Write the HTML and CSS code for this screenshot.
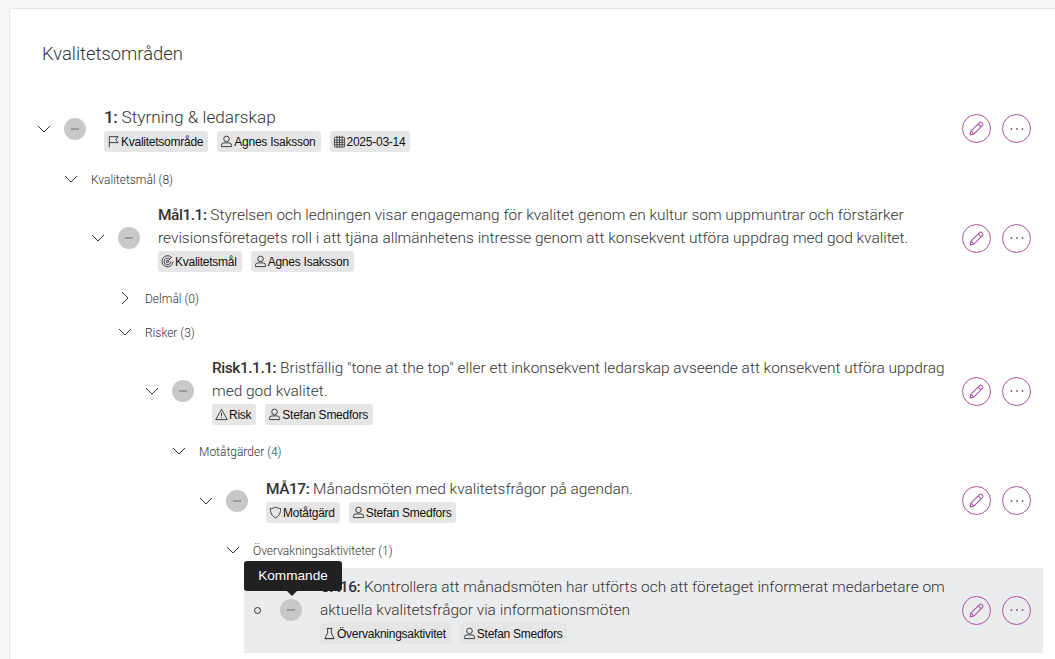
FILE: index.html
```html
<!DOCTYPE html>
<html lang="sv">
<head>
<meta charset="utf-8">
<title>Kvalitetsområden</title>
<link rel="stylesheet" href="styles.css">
</head>
<body>
<svg class="defs" width="0" height="0" aria-hidden="true">
  <symbol id="i-down" viewBox="0 0 14 14"><path d="M1 4l6 6 6-6" fill="none" stroke="currentColor"/></symbol>
  <symbol id="i-right" viewBox="0 0 14 14"><path d="M4 1l6 6-6 6" fill="none" stroke="currentColor"/></symbol>
  <symbol id="i-pen" viewBox="0 0 18 18"><g fill="none" stroke="currentColor" stroke-width="1.1" stroke-linejoin="round"><path d="M2.2 15.8l.9-4L12.2 2.7a1.6 1.6 0 0 1 2.3 0l.8.8a1.6 1.6 0 0 1 0 2.3L6.200 14.900z"/><path d="M10.800 4.100l3.100 3.100M3.100 11.800l3.100 3.100"/></g></symbol>
  <symbol id="i-dots" viewBox="0 0 18 4"><g fill="currentColor"><circle cx="3.500" cy="2" r=".9"/><circle cx="9" cy="2" r=".9"/><circle cx="14.500" cy="2" r=".9"/></g></symbol>
  <symbol id="i-flag" viewBox="0 0 14 14"><path d="M2.500 13V1.800h9.500L9.300 5l2.700 3.200H2.500" fill="none" stroke="currentColor"/></symbol>
  <symbol id="i-user" viewBox="0 0 14 14"><g fill="none" stroke="currentColor"><circle cx="7" cy="4.200" r="3"/><path d="M1.500 12.500v-1.300a2.700 2.700 0 0 1 2.700-2.700h5.600a2.700 2.700 0 0 1 2.700 2.700v1.300z"/></g></symbol>
  <symbol id="i-cal" viewBox="0 0 14 14"><g fill="none" stroke="currentColor" stroke-width=".9"><rect x="1.500" y="2.500" width="11" height="10.500" rx="1"/><path d="M1.500 5.500h11M1.500 8h11M1.500 10.500h11M4.200 2.500V13M7 1v12M9.800 2.500V13M4.200 1v1.500M9.800 1v1.500"/></g></symbol>
  <symbol id="i-target" viewBox="0 0 14 14"><g fill="none" stroke="currentColor" stroke-width="1"><path d="M11.500 2.800A6 6 0 1 0 13 7"/><path d="M9.300 4.200A3.600 3.600 0 1 0 10.600 7"/><circle cx="7" cy="7" r="1.300"/><path d="M7 7l5-5"/></g></symbol>
  <symbol id="i-warn" viewBox="0 0 14 14"><path d="M7 1.500L13.200 12.500H.8zM7 5.200v3.800M7 10v1.100" fill="none" stroke="currentColor" stroke-linejoin="round"/></symbol>
  <symbol id="i-shield" viewBox="0 0 14 14"><path d="M7 1.200C9 2.300 10.800 2.700 12.500 2.700c0 4.700-1.500 8.300-5.500 10.100C3 11 1.500 7.400 1.500 2.700 3.200 2.700 5 2.300 7 1.200z" fill="none" stroke="currentColor"/></symbol>
  <symbol id="i-flask" viewBox="0 0 14 14"><path d="M4 1.500h6M5 1.500v5L2 12.500h10L9 6.500v-5M2 12.500h10" fill="none" stroke="currentColor"/></symbol>
</svg>

<main class="card">
  <h1 class="heading">Kvalitetsområden</h1>
  <div class="tree">

    <div class="row row-top">
      <button class="toggle"><svg class="chev"><use href="#i-down"/></svg></button>
      <span class="status"><span class="status-bar"></span></span>
      <div class="body">
        <div class="title title-lg"><b>1:</b> Styrning &amp; ledarskap</div>
        <div class="tags">
          <span class="tag"><svg class="tag-icon"><use href="#i-flag"/></svg>Kvalitetsområde</span>
          <span class="tag"><svg class="tag-icon"><use href="#i-user"/></svg>Agnes Isaksson</span>
          <span class="tag"><svg class="tag-icon"><use href="#i-cal"/></svg>2025-03-14</span>
        </div>
      </div>
      <div class="actions">
        <button class="act"><svg class="pen"><use href="#i-pen"/></svg></button>
        <button class="act"><svg class="dots"><use href="#i-dots"/></svg></button>
      </div>
    </div>

    <div class="nest">
      <div class="section"><svg class="chev"><use href="#i-down"/></svg><span>Kvalitetsmål (8)</span></div>

      <div class="level">
        <div class="row">
          <button class="toggle"><svg class="chev"><use href="#i-down"/></svg></button>
          <span class="status"><span class="status-bar"></span></span>
          <div class="body">
            <div class="title"><b>Mål1.1:</b> Styrelsen och ledningen visar engagemang för kvalitet genom en kultur som uppmuntrar och förstärker revisionsföretagets roll i att tjäna allmänhetens intresse genom att konsekvent utföra uppdrag med god kvalitet.</div>
            <div class="tags">
              <span class="tag"><svg class="tag-icon"><use href="#i-target"/></svg>Kvalitetsmål</span>
              <span class="tag"><svg class="tag-icon"><use href="#i-user"/></svg>Agnes Isaksson</span>
            </div>
          </div>
          <div class="actions">
            <button class="act"><svg class="pen"><use href="#i-pen"/></svg></button>
            <button class="act"><svg class="dots"><use href="#i-dots"/></svg></button>
          </div>
        </div>

        <div class="nest">
          <div class="section"><svg class="chev"><use href="#i-right"/></svg><span>Delmål (0)</span></div>
          <div class="section"><svg class="chev"><use href="#i-down"/></svg><span>Risker (3)</span></div>

          <div class="level">
            <div class="row">
              <button class="toggle"><svg class="chev"><use href="#i-down"/></svg></button>
              <span class="status"><span class="status-bar"></span></span>
              <div class="body">
                <div class="title"><b>Risk1.1.1:</b> Bristfällig "tone at the top" eller ett inkonsekvent ledarskap avseende att konsekvent utföra uppdrag med god kvalitet.</div>
                <div class="tags">
                  <span class="tag"><svg class="tag-icon"><use href="#i-warn"/></svg>Risk</span>
                  <span class="tag"><svg class="tag-icon"><use href="#i-user"/></svg>Stefan Smedfors</span>
                </div>
              </div>
              <div class="actions">
                <button class="act"><svg class="pen"><use href="#i-pen"/></svg></button>
                <button class="act"><svg class="dots"><use href="#i-dots"/></svg></button>
              </div>
            </div>

            <div class="nest">
              <div class="section"><svg class="chev"><use href="#i-down"/></svg><span>Motåtgärder (4)</span></div>

              <div class="level">
                <div class="row row-single">
                  <button class="toggle"><svg class="chev"><use href="#i-down"/></svg></button>
                  <span class="status"><span class="status-bar"></span></span>
                  <div class="body">
                    <div class="title"><b>MÅ17:</b> Månadsmöten med kvalitetsfrågor på agendan.</div>
                    <div class="tags">
                      <span class="tag"><svg class="tag-icon"><use href="#i-shield"/></svg>Motåtgärd</span>
                      <span class="tag"><svg class="tag-icon"><use href="#i-user"/></svg>Stefan Smedfors</span>
                    </div>
                  </div>
                  <div class="actions">
                    <button class="act"><svg class="pen"><use href="#i-pen"/></svg></button>
                    <button class="act"><svg class="dots"><use href="#i-dots"/></svg></button>
                  </div>
                </div>

                <div class="nest">
                  <div class="section"><svg class="chev"><use href="#i-down"/></svg><span>Övervakningsaktiviteter (1)</span></div>

                  <div class="level">
                    <div class="row row-active">
                      <span class="toggle"><span class="bullet"></span></span>
                      <span class="status">
                        <span class="status-bar"></span>
                        <span class="tooltip">Kommande</span>
                      </span>
                      <div class="body">
                        <div class="title"><b>ÖA16:</b> Kontrollera att månadsmöten har utförts och att företaget informerat medarbetare om aktuella kvalitetsfrågor via informationsmöten</div>
                        <div class="tags">
                          <span class="tag"><svg class="tag-icon"><use href="#i-flask"/></svg>Övervakningsaktivitet</span>
                          <span class="tag"><svg class="tag-icon"><use href="#i-user"/></svg>Stefan Smedfors</span>
                        </div>
                      </div>
                      <div class="actions">
                        <button class="act"><svg class="pen"><use href="#i-pen"/></svg></button>
                        <button class="act"><svg class="dots"><use href="#i-dots"/></svg></button>
                      </div>
                    </div>
                  </div>
                </div>
              </div>
            </div>
          </div>
        </div>
      </div>
    </div>

  </div>
</main>
</body>
</html>
```

FILE: styles.css
```css
* { box-sizing: border-box; }
body {
  margin: 0;
  height: 659px;
  overflow: hidden;
  background: #f5f6f7;
  font-family: Roboto, "Liberation Sans", sans-serif;
  color: #333;
}
.defs { position: absolute; }
.card {
  margin: 8px 0 0 9px;
  height: 651px;
  overflow: hidden;
  background: #fff;
  border: 1px solid #e6e7e9;
  border-right: 0;
  border-bottom: 0;
  border-radius: 3px 0 0 0;
  padding: 0 12px 0 18px;
}
.heading {
  margin: 0;
  padding: 31px 0 0 14px;
  height: 89px;
  font-size: 18.4px;
  line-height: 28px;
  font-weight: 300;
  color: #333;
}
.row {
  display: flex;
  align-items: center;
  padding: 8px 12px 9px 0;
}
.row-top { padding: 7px 12px 4px 0; margin-bottom: 6px; }
.row-single { padding-top: 10px; padding-bottom: 10px; }
.row-active { margin-top: 1px; background: #ebecee; }
.toggle {
  flex: none;
  width: 32px;
  height: 22px;
  padding: 0;
  border: 0;
  background: none;
  color: #333;
  display: flex;
  align-items: center;
  justify-content: center;
}
.chev { width: 14px; height: 14px; color: #333; flex: none; }
.status {
  flex: none;
  position: relative;
  width: 22px;
  height: 22px;
  margin: 0 18px 0 4px;
  border-radius: 50%;
  background: #c8c8c8;
  display: flex;
  align-items: center;
  justify-content: center;
}
.status-bar { width: 8px; height: 2px; background: #9a9a9a; }
.body { flex: 1; min-width: 0; }
.title {
  font-size: 15.46px;
  line-height: 23px;
  font-weight: 300;
  color: #333;
}
.title b { font-weight: 500; letter-spacing: -.45px; }
.title-lg { font-size: 17.2px; line-height: 24px; }
.tags { display: flex; gap: 9px; margin-top: 1px; }
.row-top .tags { margin-top: 2px; }
.tag {
  display: inline-flex;
  align-items: center;
  gap: 1px;
  height: 21px;
  padding: 0 5px 0 3px;
  border-radius: 3px;
  background: #e6e6e6;
  font-family: "Liberation Sans", Arial, sans-serif;
  font-size: 12px;
  letter-spacing: -.25px;
  color: #111;
}
.tag-icon { width: 13px; height: 13px; color: #333; flex: none; }
.actions { flex: none; display: flex; gap: 11px; margin-left: 8px; }
.act {
  width: 29px;
  height: 29px;
  padding: 0;
  border-radius: 50%;
  border: 1px solid #a8539e;
  background: transparent;
  color: #a8539e;
  display: flex;
  align-items: center;
  justify-content: center;
}
.pen { width: 17px; height: 17px; }
.dots { width: 18px; height: 4px; color: #7a5a78; }
.section {
  display: flex;
  align-items: center;
  height: 34px;
  padding-left: 36px;
  gap: 13px;
  font-size: 12px;
  font-weight: 300;
  color: #333;
}
.section span { padding-top: 2px; }
.level { margin-left: 54px; }
.bullet {
  width: 7px;
  height: 7px;
  border: 1px solid #333;
  border-radius: 50%;
  margin-right: 5px;
}
.tooltip {
  position: absolute;
  z-index: 2;
  left: -36px;
  top: -38px;
  width: 98px;
  height: 30px;
  background: #212121;
  border-radius: 3px;
  color: #fff;
  font: 13.6px/30px "Liberation Sans", Arial, sans-serif;
  text-align: center;
}
.tooltip::after {
  content: "";
  position: absolute;
  left: 43px;
  top: 30px;
  border: 5px solid transparent;
  border-top-color: #212121;
  border-bottom: 0;
}
```
